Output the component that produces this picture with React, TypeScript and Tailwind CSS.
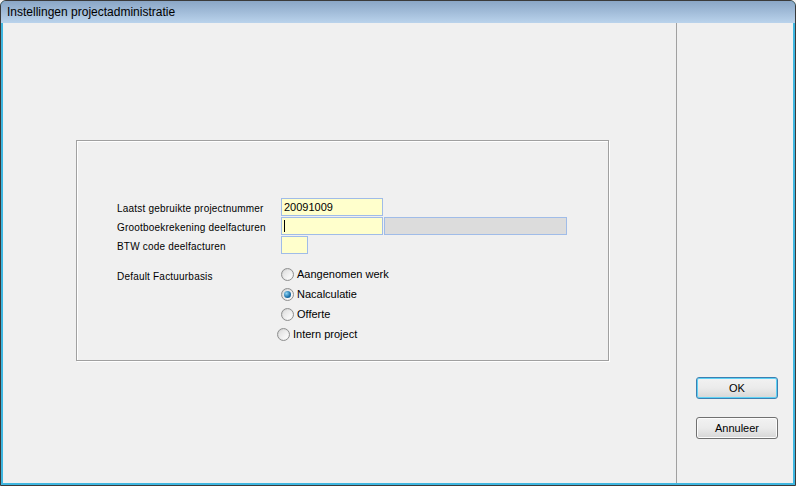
import React from "react";

const font = { fontFamily: '"Liberation Sans", Arial, sans-serif' };

function Radio({ checked }: { checked?: boolean }) {
  return (
    <span className="relative inline-flex h-[13px] w-[13px] items-center justify-center rounded-full border border-[#8e8f8f] bg-gradient-to-br from-[#cfcfcf] to-[#fbfbfb]">
      <span className="h-[9px] w-[9px] rounded-full bg-gradient-to-br from-[#dedede] to-[#ffffff]" />
      {checked && (
        <span className="absolute h-[7px] w-[7px] rounded-full bg-[radial-gradient(circle_at_35%_35%,#8fd6f5,#1b6fa8_60%,#0d4f80)]" />
      )}
    </span>
  );
}

function Button({ children, primary }: { children: React.ReactNode; primary?: boolean }) {
  return (
    <button
      className={
        "h-[22px] w-[82px] rounded-[3px] border bg-gradient-to-b from-[#f2f2f2] via-[#ebebeb] to-[#d6d6d6] text-[11px] text-black " +
        (primary
          ? "border-[#3c7fb1] shadow-[inset_0_0_0_1px_#5ed2f5]"
          : "border-[#707070] shadow-[inset_0_0_0_1px_#fcfcfc]")
      }
      style={font}
    >
      {children}
    </button>
  );
}

export default function App() {
  const radios = [
    { label: "Aangenomen werk", checked: false, indent: "pl-[4px]" },
    { label: "Nacalculatie", checked: true, indent: "pl-[4px]" },
    { label: "Offerte", checked: false, indent: "pl-[4px]" },
    { label: "Intern project", checked: false, indent: "pl-0" },
  ];

  return (
    <div className="h-[486px] w-[796px] overflow-hidden bg-[#f0f0f0]" style={font}>
      <div className="flex h-full flex-col rounded-t-[6px] border border-[#3a3a3a] bg-[#3fb6e0]">
        {/* title bar */}
        <div className="flex h-[22px] items-center rounded-t-[5px] bg-gradient-to-b from-[#8aa6c6] to-[#bad3ec] pl-[6px] text-[12px] text-black">
          Instellingen projectadministratie
        </div>

        <div className="mx-[2px] mb-[2px] flex flex-1 bg-[#f0f0f0]">
          {/* main pane */}
          <div className="w-[673px] pl-[73px] pt-[117px]">
            <div className="h-[221px] w-[533px] border border-[#a0a0a0] shadow-[1px_1px_0_#ffffff,inset_1px_1px_0_#ffffff]">
              <div className="grid grid-cols-[164px_1fr] gap-y-[1px] pl-[40px] pt-[57px] text-[10px] tracking-[0.2px] text-black">
                <div className="h-[17px] pt-[5px] leading-[12px]">Laatst gebruikte projectnummer</div>
                <div className="flex">
                  <div className="flex h-[18px] w-[102px] items-center border border-[#a0bce8] bg-[#ffffcc] pl-[2px] text-[11px] tracking-normal">
                    20091009
                  </div>
                </div>
                <div className="h-[17px] pt-[5px] leading-[12px]">Grootboekrekening deelfacturen</div>
                <div className="flex">
                  <div className="flex h-[18px] w-[102px] items-center border border-[#a0bce8] bg-[#ffffcc] pl-[2px]">
                    <span className="h-[12px] w-[1px] bg-black" />
                  </div>
                  <div className="ml-px h-[18px] w-[183px] border border-[#a0bce8] bg-[#dcdcdc]" />
                </div>
                <div className="h-[17px] pt-[5px] leading-[12px]">BTW code deelfacturen</div>
                <div className="flex">
                  <div className="h-[18px] w-[27px] border border-[#a0bce8] bg-[#ffffcc]" />
                </div>
              </div>

              <div className="mt-[10px] grid grid-cols-[160px_1fr] pl-[40px] text-black">
                <div className="pt-[5px] text-[10px] tracking-[0.2px]">Default Factuurbasis</div>
                <div className="flex flex-col">
                  {radios.map((r) => (
                    <div key={r.label} className={"flex h-[20px] items-center gap-[3px] text-[11px] " + r.indent}>
                      <Radio checked={r.checked} />
                      <span>{r.label}</span>
                    </div>
                  ))}
                </div>
              </div>
            </div>
          </div>

          {/* divider */}
          <div className="w-px bg-[#a0a0a0]" />

          {/* button column */}
          <div className="flex flex-1 flex-col gap-[18px] pl-[19px] pt-[354px]">
            <Button primary>OK</Button>
            <Button>Annuleer</Button>
          </div>
        </div>
      </div>
    </div>
  );
}
